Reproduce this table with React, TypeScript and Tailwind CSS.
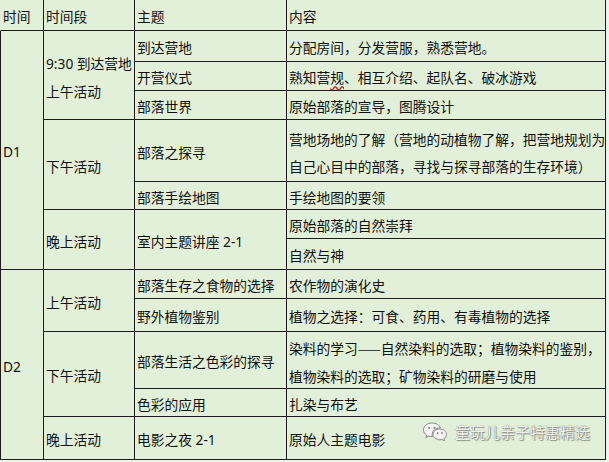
import type { ReactNode } from "react";

const base =
  "flex items-center pl-[2px] pt-[5px] border-r border-b border-[#1c1c1c] bg-[#e2efd9] whitespace-nowrap overflow-hidden";

const Cell = ({ className, children }: { className: string; children: ReactNode }) => (
  <div className={`${base} ${className}`}>{children}</div>
);

const Lines = ({ children }: { children: ReactNode }) => (
  <div className="leading-[27.5px]">{children}</div>
);

const WeChatIcon = () => (
  <svg width="26" height="22" viewBox="0 0 26 22" fill="none">
    <path
      d="M10 2C5.2 2 1.5 5 1.5 8.8c0 2.2 1.2 4.1 3.1 5.3l-.8 2.6 3-1.6c1 .3 2 .4 3.2.4h.6c-.3-.7-.4-1.4-.4-2.2 0-3.6 3.4-6.4 7.6-6.4h.6C17.6 4.1 14.2 2 10 2z"
      fill="#f4f4f4"
      stroke="#8a8a8a"
      strokeWidth="1"
    />
    <path
      d="M17.8 8c-3.7 0-6.7 2.4-6.7 5.4s3 5.4 6.7 5.4c.8 0 1.6-.1 2.3-.3l2.4 1.3-.6-2.1c1.6-1 2.6-2.6 2.6-4.3 0-3-3-5.4-6.7-5.4z"
      fill="#f4f4f4"
      stroke="#8a8a8a"
      strokeWidth="1"
    />
    <circle cx="7.2" cy="6.8" r="1.1" fill="#8a8a8a" />
    <circle cx="12.4" cy="6.8" r="1.1" fill="#8a8a8a" />
    <circle cx="15.6" cy="12" r="0.9" fill="#8a8a8a" />
    <circle cx="20" cy="12" r="0.9" fill="#8a8a8a" />
  </svg>
);

export default function App() {
  return (
    <div className="relative w-[609px] h-[462px] overflow-hidden bg-[#eef3ea] text-[13.75px] text-[#111] font-['Noto_Sans','Noto_Sans_CJK_SC',sans-serif]">
      <div className="grid grid-cols-[44px_91px_152px_319px] grid-rows-[31px_31px_29px_29px_62px_28px_29px_31px_29px_33px_57px_28px_43px]">
        {/* header */}
        <Cell className="col-start-1 row-start-1 border-l border-l-transparent">时间</Cell>
        <Cell className="col-start-2 row-start-1">时间段</Cell>
        <Cell className="col-start-3 row-start-1">主题</Cell>
        <Cell className="col-start-4 row-start-1">内容</Cell>

        {/* day column */}
        <Cell className="col-start-1 row-start-2 row-span-7 border-l">D1</Cell>
        <Cell className="col-start-1 row-start-9 row-span-5 border-l">D2</Cell>

        {/* period column */}
        <Cell className="col-start-2 row-start-2 row-span-3">
          <Lines>
            9:30 到达营地
            <br />
            上午活动
          </Lines>
        </Cell>
        <Cell className="col-start-2 row-start-5 row-span-2">下午活动</Cell>
        <Cell className="col-start-2 row-start-7 row-span-2">晚上活动</Cell>
        <Cell className="col-start-2 row-start-9 row-span-2">上午活动</Cell>
        <Cell className="col-start-2 row-start-11 row-span-2">下午活动</Cell>
        <Cell className="col-start-2 row-start-13">晚上活动</Cell>

        {/* topic column */}
        <Cell className="col-start-3 row-start-2">到达营地</Cell>
        <Cell className="col-start-3 row-start-3">开营仪式</Cell>
        <Cell className="col-start-3 row-start-4">部落世界</Cell>
        <Cell className="col-start-3 row-start-5">部落之探寻</Cell>
        <Cell className="col-start-3 row-start-6">部落手绘地图</Cell>
        <Cell className="col-start-3 row-start-7 row-span-2">室内主题讲座 2-1</Cell>
        <Cell className="col-start-3 row-start-9">部落生存之食物的选择</Cell>
        <Cell className="col-start-3 row-start-10">野外植物鉴别</Cell>
        <Cell className="col-start-3 row-start-11">部落生活之色彩的探寻</Cell>
        <Cell className="col-start-3 row-start-12">色彩的应用</Cell>
        <Cell className="col-start-3 row-start-13">电影之夜 2-1</Cell>

        {/* content column */}
        <Cell className="col-start-4 row-start-2">分配房间，分发营服，熟悉营地。</Cell>
        <Cell className="col-start-4 row-start-3">
          熟知营
          <span className="underline decoration-wavy decoration-red-600 underline-offset-2">规</span>
          、相互介绍、起队名、破冰游戏
        </Cell>
        <Cell className="col-start-4 row-start-4">原始部落的宣导，图腾设计</Cell>
        <Cell className="col-start-4 row-start-5">
          <Lines>
            营地场地的了解（营地的动植物了解，把营地规划为
            <br />
            自己心目中的部落，寻找与探寻部落的生存环境）
          </Lines>
        </Cell>
        <Cell className="col-start-4 row-start-6">手绘地图的要领</Cell>
        <Cell className="col-start-4 row-start-7">原始部落的自然崇拜</Cell>
        <Cell className="col-start-4 row-start-8">自然与神</Cell>
        <Cell className="col-start-4 row-start-9">农作物的演化史</Cell>
        <Cell className="col-start-4 row-start-10">植物之选择：可食、药用、有毒植物的选择</Cell>
        <Cell className="col-start-4 row-start-11">
          <Lines>
            染料的学习
            <span className="font-['Noto_Sans_CJK_SC',sans-serif]">——</span>
            自然染料的选取；植物染料的鉴别，
            <br />
            植物染料的选取；矿物染料的研磨与使用
          </Lines>
        </Cell>
        <Cell className="col-start-4 row-start-12">扎染与布艺</Cell>
        <Cell className="col-start-4 row-start-13">原始人主题电影</Cell>
      </div>

      {/* watermark */}
      <div className="absolute left-[422px] top-[421px] flex items-center gap-[7px]">
        <WeChatIcon />
        <span className="text-[15px] text-[#f2f2f2] [text-shadow:0_0_1px_rgba(0,0,0,0.55),1px_1px_1px_rgba(0,0,0,0.35)]">
          童玩儿亲子特惠精选
        </span>
      </div>
    </div>
  );
}
